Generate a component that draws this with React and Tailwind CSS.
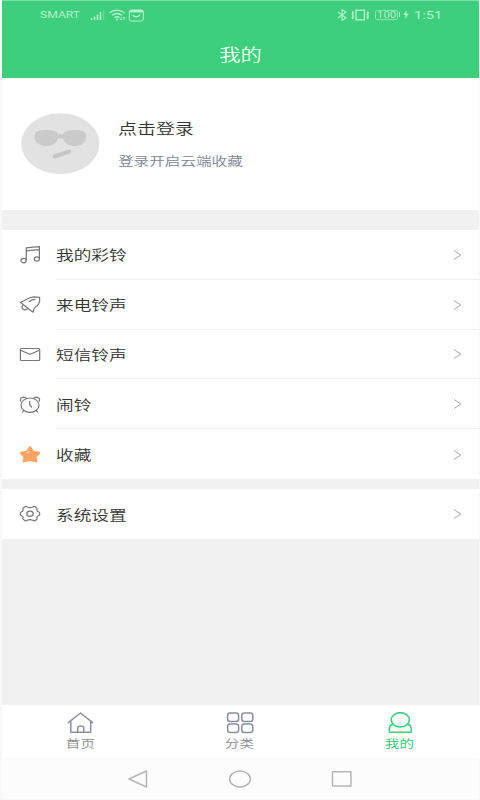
import React from 'react';

const MusicIcon = () => (
    <svg width="24" height="20" viewBox="0 0 24 20" fill="none" stroke="#777" strokeWidth="1.2">
        <path d="M8.3 15.3V2.8Q15 1.8 21.4 1.6V13.8M8.3 5.8Q15 4.9 21.4 4.6" />
        <ellipse cx="5.6" cy="15.6" rx="2.7" ry="2.2" />
        <ellipse cx="18.8" cy="14" rx="2.6" ry="2.2" />
    </svg>
);

const BellIcon = () => (
    <svg width="24" height="20" viewBox="0 0 24 20" fill="none" stroke="#777" strokeWidth="1.2" strokeLinejoin="round" strokeLinecap="round">
        <path d="M2.3 7.3C7 6.6 9.5 2.2 15.5 1.8L21.6 2.3C22.2 7 20.5 10.5 17.2 12.3C15.2 13.6 15.8 16 15 17.3Z" />
        <path d="M11.2 6.7Q14 4.3 17 4.4M4.6 10.3C2.6 14 6.4 16.2 9.4 13.8" />
    </svg>
);

const MailIcon = () => (
    <svg width="24" height="20" viewBox="0 0 24 20" fill="none" stroke="#777" strokeWidth="1.2">
        <rect x="2.4" y="3.5" width="19.3" height="12" rx="1" />
        <path d="M2.6 5.3Q7 7.4 12 9.2Q17 7.4 21.4 5.3" />
    </svg>
);

const AlarmIcon = () => (
    <svg width="24" height="20" viewBox="0 0 24 20" fill="none" stroke="#777" strokeWidth="1.2" strokeLinecap="round">
        <ellipse cx="12" cy="10.2" rx="9" ry="7.2" />
        <path d="M2.8 6.3C1 3.3 5 .8 8.3 3.2M21.2 6.3C23 3.3 19 .8 15.7 3.2M5.8 15.7L4.3 17.2M18.2 15.7L19.7 17.2M11.8 6.4V10.2L13.5 12" />
    </svg>
);

const StarIcon = () => (
    <svg width="24" height="20" viewBox="0 0 24 20">
        <path d="M12 2.5L15 7L21 8L17.4 11.7L18.2 16.2L12 14.9L5.8 16.2L6.6 11.7L3 8L9 7Z" fill="#fca463" stroke="#fca463" strokeWidth="2.4" strokeLinejoin="round" />
        <path d="M9.2 8Q9.8 6.9 11.2 6.4" fill="none" stroke="#ffe3cb" strokeWidth="1.1" strokeLinecap="round" />
    </svg>
);

const GearIcon = () => (
    <svg width="24" height="20" viewBox="0 0 24 20" fill="none" stroke="#777" strokeWidth="1.2" strokeLinejoin="round">
        <path d="M6.8 2.8Q8 1.8 9.2 3Q12 4.3 14.8 3Q16 1.8 17.2 2.8L18.8 4Q19.4 5 18.8 6.2Q19 7.5 21.3 8.3Q22.2 9.6 21.3 11.2Q19 12 18.8 13.3Q19.5 14.7 18.6 15.6L17 16.7Q16 17.2 14.8 16.3Q12 15 9.2 16.3Q8 17.2 7 16.7L5.4 15.6Q4.5 14.7 5.2 13.3Q5 12 2.7 11.2Q1.8 9.6 2.7 8.3Q5 7.5 5.2 6.2Q4.6 5 5.2 4Z" />
        <ellipse cx="12" cy="9.7" rx="3.2" ry="2.6" />
    </svg>
);

const HomeIcon = () => (
    <svg width="28" height="22" viewBox="0 0 28 22" fill="none" stroke="#8a90a4" strokeWidth="1.5" strokeLinejoin="round" strokeLinecap="round">
        <path d="M1.3 10.6L13.5 1L25.7 10.6M3.8 9.3V20.3H23.7V9.3M10.7 20V15.8Q10.7 14 13.7 14Q16.8 14 16.8 15.8V20" />
    </svg>
);

const GridIcon = () => (
    <svg width="28" height="22" viewBox="0 0 28 22" fill="none" stroke="#8a90a4" strokeWidth="1.5">
        <rect x="1.6" y="1" width="11" height="8.6" rx="2.5" />
        <rect x="15.8" y="1" width="11" height="8.6" rx="2.5" />
        <rect x="1.6" y="12" width="11" height="8.6" rx="2.5" />
        <rect x="15.8" y="12" width="11" height="8.6" rx="2.5" />
    </svg>
);

const UserIcon = () => (
    <svg width="28" height="22" viewBox="0 0 28 22" fill="none" stroke="#3bcf7b" strokeWidth="1.6" strokeLinejoin="round">
        <ellipse cx="14.3" cy="7.8" rx="9.1" ry="7.1" />
        <path d="M7 12.2Q3.3 13.4 3.3 17V19.2Q3.3 20.3 4.5 20.3H24.1Q25.3 20.3 25.3 19.2V17Q25.3 13.4 21.6 12.2" />
    </svg>
);

const ChevronIcon = () => (
    <svg className="mt-px ml-auto mr-[17px]" width="9" height="12" viewBox="0 0 9 12" fill="none" stroke="#a5a5a5" strokeWidth="1">
        <path d="M1 1.5L7.8 6L1 10.5" />
    </svg>
);

const menu = [
    { label: '我的彩铃', Icon: MusicIcon },
    { label: '来电铃声', Icon: BellIcon },
    { label: '短信铃声', Icon: MailIcon },
    { label: '闹铃', Icon: AlarmIcon },
    { label: '收藏', Icon: StarIcon },
];

const tabs = [
    { label: '首页', Icon: HomeIcon, color: 'text-[#8c8c8c]' },
    { label: '分类', Icon: GridIcon, color: 'text-[#8c8c8c]' },
    { label: '我的', Icon: UserIcon, color: 'text-[#2fc871]' },
];

const Row = ({ label, Icon, last }) => (
    <div className="flex h-[49.8px] pl-[16px]">
        <div className="flex w-[38px] shrink-0 items-center pt-px"><Icon /></div>
        <div className={`flex flex-1 items-center ${last ? '' : 'border-b border-[#efefef]'}`}>
            <span className="origin-left scale-x-[1.28] text-[13.8px] font-[350] leading-5 text-[#333]">{label}</span>
            <ChevronIcon />
        </div>
    </div>
);

const StatusBar = () => (
    <div className="flex h-[27px] items-center pl-[38px] pr-[36px] text-[#b5efcd]">
        <span className="w-[49px] origin-left scale-x-[1.24] whitespace-nowrap font-[Roboto] text-[9.8px] leading-3">SMART</span>
        <svg width="56" height="14" viewBox="0 0 56 14" fill="none" stroke="currentColor">
            <path d="M2.5 12V10M5.5 12V8.5M8.5 12V6.5M11.5 12V4" strokeWidth="1.6" />
            <path d="M14.5 12V2.5" strokeWidth="1.4" opacity=".35" />
            <path d="M20.5 4.8Q28 -.5 35.5 4.8M23 7.3Q28 3.7 33 7.3M25.5 9.6Q28 8 30.5 9.6" strokeWidth="1.4" />
            <circle cx="28" cy="11.5" r="1" fill="currentColor" stroke="none" />
            <path d="M32 9V12M30.9 10.8L32 12L33.1 10.8M35 12V9M33.9 10.2L35 9L36.1 10.2" strokeWidth=".8" />
            <rect x="40.3" y="2" width="14" height="11" rx="2" />
            <path d="M41 3.2H54" strokeWidth="2.5" />
            <path d="M43.5 7Q47.3 10.5 51 7" strokeWidth="1.2" />
        </svg>
        <div className="ml-auto flex items-center">
            <svg width="34" height="14" viewBox="0 0 34 14" fill="none" stroke="currentColor" strokeWidth="1.1">
                <path d="M2 4L10 10L6 12.3V1.7L10 4L2 10" />
                <rect x="20" y="2.2" width="8.4" height="9.6" strokeWidth="1.4" />
                <path d="M16.3 3.5L17.3 5L16.3 6.5L17.3 8L16.3 9.5L17.3 11M31.3 3.5L32.3 5L31.3 6.5L32.3 8L31.3 9.5L32.3 11" strokeWidth="1.5" />
            </svg>
            <div className="ml-[5px] flex h-[10px] w-[23px] items-center justify-center rounded-[2px] border border-[#8de4b1]">
                <span className="scale-x-[1.25] font-[Roboto] text-[9px] leading-[8px]">100</span>
            </div>
            <div className="ml-px h-[5px] w-px bg-[#b5efcd]" />
            <svg className="ml-[3px]" width="6" height="9" viewBox="0 0 6 9" fill="currentColor"><path d="M3.5 0L.3 5H2.6L2 9L5.8 3.8H3.4Z" /></svg>
            <span className="ml-[5px] w-[29px] origin-left scale-x-[1.28] whitespace-nowrap font-[Roboto] text-[11.4px] leading-3">1:51</span>
        </div>
    </div>
);

const App = () => (
    <div className="h-[800px] w-[480px] overflow-hidden bg-[#f8f8f8] pb-px pl-[1.5px] pr-px font-['Noto_Sans_CJK_SC',sans-serif]">
        <div className="flex h-full flex-col bg-[#f1f1f1]">
            <header className="h-[78px] shrink-0 border-t border-[#80dfaa] bg-[#3dcf7b]">
                <StatusBar />
                <h1 className="mt-[14px] flex justify-center text-[16.6px] font-[350] leading-6 text-white">
                    <span className="scale-x-[1.28]">我的</span>
                </h1>
            </header>

            {/* Login */}
            <section className="flex h-[132px] shrink-0 items-center bg-white pl-[19.5px]">
                <svg width="79" height="62" viewBox="0 0 79 62">
                    <ellipse cx="39.3" cy="30.7" rx="39.1" ry="30.4" fill="#e2e2e2" />
                    <path d="M13.5 23.5C13.5 18.5 18 17 25 17C31.5 17 35.5 18 37.3 21.5Q39.5 20.5 41.7 21.5C43.5 18 47.5 17 54 17C61 17 65.3 18.5 65.3 23.5C65.3 29.5 60.5 33 54 33C48 33 43.5 30.5 42 25.5H37C35.5 30.5 31 33 25 33C18.5 33 13.5 29.5 13.5 23.5Z" fill="#cacaca" />
                    <path d="M33.8 43.5L48.3 38.5" stroke="#c5c5c5" strokeWidth="4" strokeLinecap="round" />
                </svg>
                <div className="ml-[18px] flex flex-col items-start">
                    <span className="origin-left scale-x-[1.28] text-[14.8px] font-[350] leading-[22px] text-[#333]">点击登录</span>
                    <span className="mt-3 origin-left scale-x-[1.28] text-[12.2px] font-[350] leading-5 text-[#7d8596]">登录开启云端收藏</span>
                </div>
            </section>

            <nav className="mt-5 shrink-0 bg-white">
                {menu.map((item, i) => (
                    <Row key={item.label} label={item.label} Icon={item.Icon} last={i === menu.length - 1} />
                ))}
            </nav>

            <nav className="mt-[10px] shrink-0 bg-white">
                <Row label="系统设置" Icon={GearIcon} last />
            </nav>

            {/* Bottom tabs */}
            <div className="-mr-px mt-auto grid h-[53px] shrink-0 grid-cols-[158px_160px_160px] bg-white">
                {tabs.map(({ label, Icon, color }) => (
                    <div key={label} className={`flex flex-col items-center pt-[7px] ${color}`}>
                        <Icon />
                        <span className="mt-px scale-x-[1.28] text-[11.4px] font-[350] leading-4">{label}</span>
                    </div>
                ))}
            </div>

            {/* System buttons */}
            <div className="flex h-[41px] shrink-0 items-center justify-center bg-[#fcfcfc]">
                <svg width="230" height="20" viewBox="0 0 230 20" fill="none" stroke="#b5b5b5" strokeWidth="1.5" strokeLinejoin="round">
                    <path d="M4 10L21.5 2V18Z" />
                    <ellipse cx="115" cy="10" rx="10.3" ry="8" />
                    <rect x="207.5" y="2.7" width="18.5" height="14.3" rx=".5" />
                </svg>
            </div>
        </div>
    </div>
);

export default App;
